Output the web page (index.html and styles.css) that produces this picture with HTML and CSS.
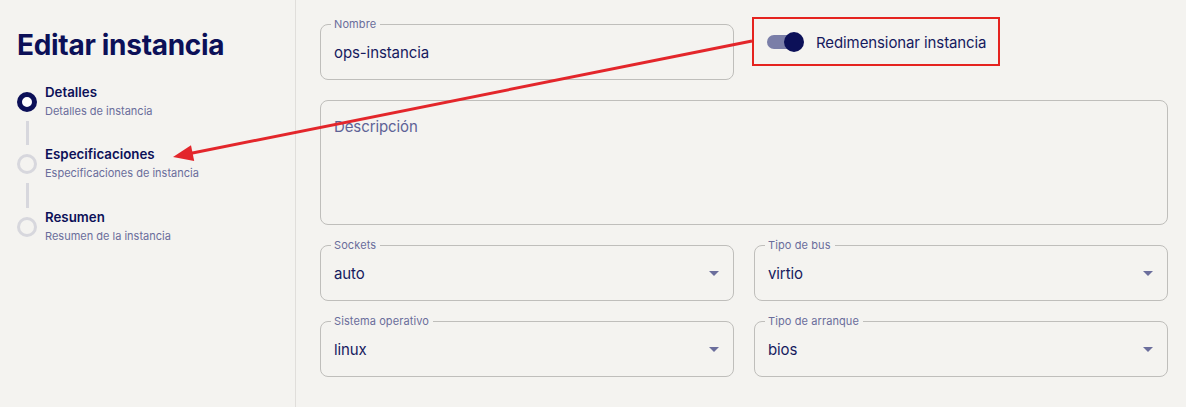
FILE: index.html
```html
<!DOCTYPE html>
<html lang="es">
<head>
<meta charset="utf-8">
<title>Editar instancia</title>
<link rel="stylesheet" href="styles.css">
</head>
<body>
<div class="page">
  <aside class="sidebar">
    <h1 class="title">Editar instancia</h1>
    <ol class="steps">
      <li class="step">
        <div class="marker"><span class="dot active"></span><span class="line"></span></div>
        <div class="step-text"><div class="step-title">Detalles</div><div class="step-sub">Detalles de instancia</div></div>
      </li>
      <li class="step">
        <div class="marker"><span class="dot"></span><span class="line"></span></div>
        <div class="step-text"><div class="step-title">Especificaciones</div><div class="step-sub">Especificaciones de instancia</div></div>
      </li>
      <li class="step">
        <div class="marker"><span class="dot"></span></div>
        <div class="step-text"><div class="step-title">Resumen</div><div class="step-sub">Resumen de la instancia</div></div>
      </li>
    </ol>
  </aside>
  <main class="main">
    <div class="row row-first">
      <fieldset class="field">
        <legend class="label">Nombre</legend>
        <div class="value">ops-instancia</div>
      </fieldset>
      <div class="toggle-cell">
        <div class="highlight">
          <span class="switch"><span class="track"></span><span class="thumb"></span></span>
          <span class="switch-label">Redimensionar instancia</span>
        </div>
      </div>
    </div>
    <div class="textarea"><span class="placeholder">Descripción</span></div>
    <div class="row row-mid">
      <fieldset class="field">
        <legend class="label">Sockets</legend>
        <div class="value select"><span class="sel-text">auto</span><svg class="caret" width="10" height="5" viewBox="0 0 10 5"><path d="M0 0h10L5 5z"/></svg></div>
      </fieldset>
      <fieldset class="field">
        <legend class="label">Tipo de bus</legend>
        <div class="value select"><span class="sel-text">virtio</span><svg class="caret" width="10" height="5" viewBox="0 0 10 5"><path d="M0 0h10L5 5z"/></svg></div>
      </fieldset>
    </div>
    <div class="row">
      <fieldset class="field">
        <legend class="label">Sistema operativo</legend>
        <div class="value select"><span class="sel-text">linux</span><svg class="caret" width="10" height="5" viewBox="0 0 10 5"><path d="M0 0h10L5 5z"/></svg></div>
      </fieldset>
      <fieldset class="field">
        <legend class="label">Tipo de arranque</legend>
        <div class="value select"><span class="sel-text">bios</span><svg class="caret" width="10" height="5" viewBox="0 0 10 5"><path d="M0 0h10L5 5z"/></svg></div>
      </fieldset>
    </div>
  </main>
  <svg class="annotation" width="1186" height="407" viewBox="0 0 1186 407">
    <line x1="752" y1="41" x2="190" y2="153.5" stroke="#e3262b" stroke-width="3"/>
    <polygon points="173,157 194.2,160.9 191,145.2" fill="#e3262b"/>
  </svg>
</div>
</body>
</html>
```

FILE: styles.css
```css
* { box-sizing: border-box; }
html, body { margin: 0; padding: 0; }
body {
  background: #f4f3f0;
  font-family: Inter, "Noto Sans", sans-serif;
  color: #161a5e;
}
.page {
  position: relative;
  display: flex;
  width: 1186px;
  height: 407px;
  overflow: hidden;
}
.sidebar {
  width: 296px;
  flex: none;
  border-right: 1px solid #e0dedb;
  padding: 28px 0 0 17px;
}
.title {
  margin: 0;
  font-size: 28px;
  line-height: 34px;
  font-weight: 700;
  color: #0c1058;
  letter-spacing: -0.3px;
}
.steps {
  list-style: none;
  margin: 21px 0 0;
  padding: 0;
}
.step {
  display: flex;
  gap: 8px;
}
.marker {
  width: 20px;
  flex: none;
  display: flex;
  flex-direction: column;
  align-items: center;
  padding-top: 9px;
}
.dot {
  display: block;
  width: 20px;
  height: 20px;
  border-radius: 50%;
  border: 3px solid #d7d7dd;
}
.dot.active {
  border: 5px solid #0c1058;
  background: #ffffff;
}
.line {
  display: block;
  width: 3px;
  height: 24px;
  margin: 9px 0 0 1px;
  background: #d7d7dd;
}
.step:nth-child(2) .line { height: 25px; }
.step-title {
  font-size: 13.3px;
  line-height: 18px;
  font-weight: 600;
  color: #0c1058;
}
.step-sub {
  font-size: 11px;
  line-height: 20px;
  color: #6a6d9b;
}
.main {
  flex: 1;
  padding: 17px 18px 0 24px;
  display: flex;
  flex-direction: column;
}
.row {
  display: grid;
  grid-template-columns: 1fr 1fr;
  column-gap: 20px;
}
.row-first { margin-bottom: 20px; }
.row-mid { margin-bottom: 13px; }
.field {
  margin: 0;
  min-width: 0;
  border: 1px solid #bfbebb;
  border-radius: 8px;
  padding: 0 13px;
}
.label {
  font-size: 11px;
  line-height: 14px;
  letter-spacing: 0.1px;
  color: #6a6d9b;
  padding: 0 4px 0 3px;
  margin-left: -3px;
}
.value {
  height: 48px;
  padding-top: 10px;
  font-size: 15px;
  line-height: 24px;
  letter-spacing: -0.1px;
  color: #161a5e;
}
.select {
  display: flex;
  align-items: flex-start;
}
.sel-text { flex: 1; }
.caret {
  margin: 9px 1px 0 0;
  fill: #6b6e9c;
}
.toggle-cell {
  display: flex;
  align-items: flex-start;
}
.highlight {
  margin-left: -2px;
  width: 248px;
  height: 49px;
  border: 2px solid #e5231f;
  display: flex;
  align-items: center;
  padding-left: 13px;
}
.switch {
  display: flex;
  align-items: center;
  width: 37px;
  flex: none;
}
.track {
  width: 34px;
  height: 14px;
  border-radius: 7px;
  background: #7a7ea8;
  flex: none;
}
.thumb {
  width: 20px;
  height: 20px;
  border-radius: 50%;
  background: #0c1058;
  margin-left: -17px;
  flex: none;
}
.switch-label {
  margin-left: 12px;
  margin-top: 2px;
  font-size: 15px;
  line-height: 24px;
  letter-spacing: -0.1px;
  white-space: nowrap;
  color: #161a5e;
}
.textarea {
  height: 125px;
  border: 1px solid #bfbebb;
  border-radius: 8px;
  padding: 14px 13px 0;
  margin-bottom: 13px;
  font-size: 15px;
  line-height: 24px;
  letter-spacing: -0.1px;
}
.placeholder { color: #5e6296; }
.annotation {
  position: absolute;
  left: 0;
  top: 0;
  pointer-events: none;
}
```
